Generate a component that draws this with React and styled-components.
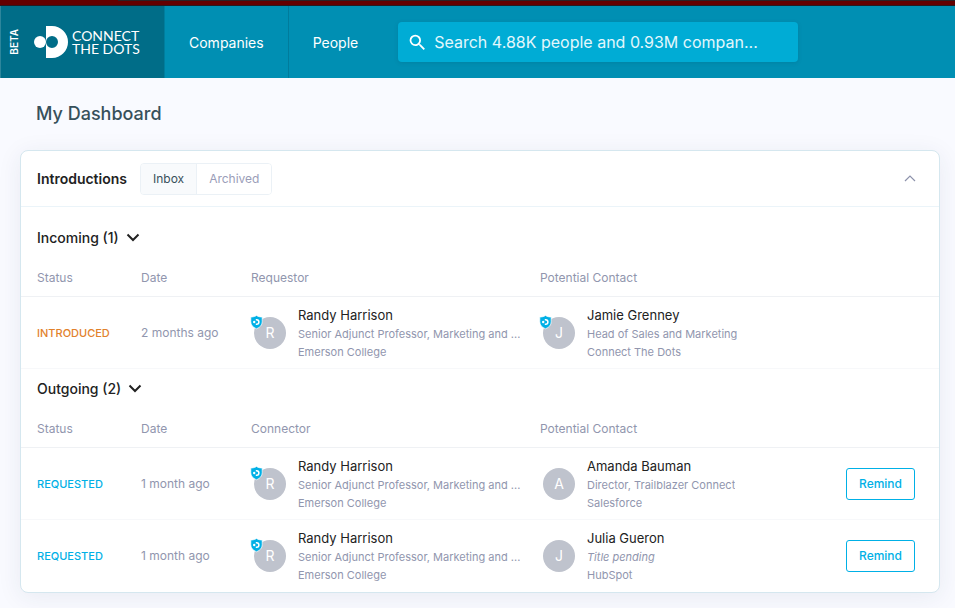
import React, { useState } from "react";
import styled, { createGlobalStyle } from "styled-components";

//Styling//
const GlobalStyle = createGlobalStyle`
  * {
    box-sizing: border-box;
  }
  body {
    margin: 0;
    background: #f9faff;
    color: #222;
    font-family: Inter, "Liberation Sans", sans-serif;
  }
  button,
  input {
    font-family: inherit;
  }
`;

const TopStrip = styled.div`
  height: 6px;
  background: linear-gradient(90deg, #640000 118px, #2b2226 118px) top / 100% 1px no-repeat, #640000;
  border-bottom: 1px solid #2a1a20;
`;

const Header = styled.header`
  display: flex;
  align-items: stretch;
  height: 72px;
  background: #008fb3;
`;

const Brand = styled.a`
  display: flex;
  align-items: center;
  width: 165px;
  padding-left: 7px;
  background: #006d88;
  border-left: 1px solid #2d869c;
  border-right: 1px solid #007e9e;
  color: #fff;
  text-decoration: none;
`;

const Beta = styled.span`
  width: 12px;
  margin-right: 14px;
  writing-mode: vertical-rl;
  transform: rotate(180deg);
  font-size: 10px;
  line-height: 12px;
  font-weight: 600;
`;

const Wordmark = styled.span`
  width: 80px;
  margin-left: 4px;
  font-family: Lato, sans-serif;
  font-size: 14px;
  line-height: 13px;
`;

const Nav = styled.nav`
  display: flex;
`;

const NavItem = styled.a`
  display: flex;
  align-items: center;
  padding: 0 24px;
  color: #fff;
  font-size: 14px;
  text-decoration: none;

  & + & {
    border-left: 1px solid #007c9c;
  }
`;

const Search = styled.label`
  display: flex;
  align-items: center;
  align-self: center;
  flex: 0 1 400px;
  height: 40px;
  margin: 0 16px;
  padding: 0 9px;
  background: #00acd5;
  border-radius: 4px;
  box-shadow: 0 1px 4px rgba(0, 80, 100, 0.2);
  color: #fff;
`;

const SearchInput = styled.input`
  flex: 1;
  min-width: 0;
  margin-left: 6px;
  padding: 0;
  border: 0;
  outline: 0;
  background: none;
  color: #fff;
  font-size: 16px;

  &::placeholder {
    color: #e3f7fc;
    opacity: 1;
  }
`;

const Main = styled.main`
  padding: 20px 15px 16px 20px;
`;

const PageTitle = styled.h1`
  margin: 0 0 20px;
  padding-left: 16px;
  color: #37505b;
  font-size: 18px;
  line-height: 32px;
  font-weight: 500;
`;

const Card = styled.section`
  background: #fff;
  border: 1px solid #d5e7ef;
  border-radius: 8px;
  box-shadow: 0 4px 24px rgba(40, 50, 90, 0.08);
`;

const CardHeader = styled.div`
  display: flex;
  align-items: center;
  height: 56px;
  padding: 0 19px 0 16px;
  border-bottom: 1px solid #ebf4f9;
`;

const CardTitle = styled.h2`
  margin: 0 13px 0 0;
  font-size: 14px;
  font-weight: 600;
`;

const Tabs = styled.div`
  display: flex;
  height: 32px;
  margin-right: auto;
  border: 1px solid #ebf1f6;
  border-radius: 4px;
  overflow: hidden;
`;

const Tab = styled.button`
  padding: 0 12px;
  border: 0;
  background: ${props => (props.$active ? "#f8fafc" : "#fff")};
  color: ${props => (props.$active ? "#37505b" : "#9a9db8")};
  font-size: 12px;

  & + & {
    border-left: 1px solid #ebf1f6;
  }
`;

const IconButton = styled.button`
  display: flex;
  padding: ${props => (props.$tight ? "0" : "4px")};
  border: 0;
  background: none;
  color: inherit;
`;

const Group = styled.section`
  &:first-of-type {
    padding-top: 11px;
  }
`;

const GroupHeader = styled.div`
  display: flex;
  align-items: center;
  height: 42px;
  padding: 0 16px 4px;
`;

const GroupTitle = styled.h3`
  margin: 0 4px 0 0;
  font-size: 14px;
  font-weight: 500;
`;

const Table = styled.table`
  width: 100%;
  table-layout: fixed;
  border-collapse: separate;
  border-spacing: 0;
`;

const Th = styled.th`
  width: ${props => props.$width || "auto"};
  height: 37px;
  padding: 0 0 2px ${props => (props.$first ? "16px" : "0")};
  border-bottom: 1px solid #eff1f4;
  color: #9196ae;
  font-size: 12px;
  font-weight: 400;
  text-align: left;
`;

const Row = styled.tr`
  ${Group}:last-of-type &:last-child td {
    border-bottom-color: transparent;
  }
`;

const Td = styled.td`
  height: 72px;
  padding: 0 ${props => (props.$action ? "24px" : "0")} 0 ${props => (props.$first ? "16px" : "0")};
  border-bottom: 1px solid #f7f8fa;
  color: #9196ae;
  font-size: 12px;
  text-align: ${props => (props.$action ? "right" : "left")};
`;

const Status = styled.span`
  color: ${props => (props.$introduced ? "#e2812b" : "#00b0e6")};
  font-size: 11px;
  font-weight: 500;
`;

const PersonBox = styled.div`
  display: flex;
  align-items: center;
  padding-left: 3px;
`;

const Avatar = styled.div`
  position: relative;
  flex: none;
  width: 32px;
  height: 32px;
  margin-right: 12px;
  border-radius: 50%;
  background: #bfc3cd;
  color: #fff;
  font-size: 14px;
  line-height: 32px;
  text-align: center;
`;

const Badge = styled.svg`
  position: absolute;
  top: -2px;
  left: -4px;
`;

const Details = styled.div`
  min-width: 0;
  padding-right: 16px;
`;

const Name = styled.div`
  color: #222;
  font-size: 13px;
  line-height: 20px;
`;

const Line = styled.div`
  overflow: hidden;
  text-overflow: ellipsis;
  white-space: nowrap;
  font-size: 11px;
  line-height: 18px;
  font-style: ${props => (props.$pending ? "italic" : "normal")};
`;

const Remind = styled.button`
  height: 32px;
  padding: 0 12px;
  border: 1px solid #00b0e6;
  border-radius: 3px;
  background: #fff;
  color: #00b0e6;
  font-size: 12px;
  font-weight: 500;
`;

const randy = {
  name: "Randy Harrison",
  title: "Senior Adjunct Professor, Marketing and ...",
  company: "Emerson College",
  member: true
};

const groups = [
  {
    title: "Incoming (1)",
    from: "Requestor",
    rows: [
      {
        status: "INTRODUCED",
        date: "2 months ago",
        person: randy,
        contact: {
          name: "Jamie Grenney",
          title: "Head of Sales and Marketing",
          company: "Connect The Dots",
          member: true
        }
      }
    ]
  },
  {
    title: "Outgoing (2)",
    from: "Connector",
    rows: [
      {
        status: "REQUESTED",
        date: "1 month ago",
        person: randy,
        contact: {
          name: "Amanda Bauman",
          title: "Director, Trailblazer Connect",
          company: "Salesforce"
        }
      },
      {
        status: "REQUESTED",
        date: "1 month ago",
        person: randy,
        contact: { name: "Julia Gueron", company: "HubSpot" }
      }
    ]
  }
];

const Logo = () => (
  <svg width="34" height="32" viewBox="0 0 34 32" fill="#fff" aria-hidden="true">
    <circle cx="6" cy="16" r="6" />
    <path
      fillRule="evenodd"
      d="M12 0h6a16 16 0 0 1 0 32h-6V16a6 6 0 1 0 12 0a6 6 0 1 0-12 0z"
    />
  </svg>
);

const SearchIcon = () => (
  <svg width="21" height="21" viewBox="0 0 24 24" fill="currentColor" aria-hidden="true">
    <path d="M15.5 14h-.79l-.28-.27A6.47 6.47 0 0 0 16 9.5 6.5 6.5 0 1 0 9.5 16c1.61 0 3.09-.59 4.23-1.57l.27.28v.79l5 4.99L20.49 19l-4.99-5zm-6 0C7.01 14 5 11.99 5 9.5S7.01 5 9.5 5 14 7.01 14 9.5 11.99 14 9.5 14z" />
  </svg>
);

const ChevronDown = () => (
  <svg width="20" height="20" viewBox="0 0 20 20" fill="none" aria-hidden="true">
    <path d="M4.5 7.5L10 13l5.5-5.5" stroke="#222" strokeWidth="2" />
  </svg>
);

const ChevronUp = () => (
  <svg width="12" height="12" viewBox="0 0 12 12" fill="none" aria-hidden="true">
    <path d="M1 8l5-5 5 5" stroke="#8d92ab" strokeWidth="1.2" />
  </svg>
);

const MemberBadge = () => (
  <Badge width="14" height="15" viewBox="0 0 14 15" aria-hidden="true">
    <path
      d="M6.5.4C8 1.6 10 2 12.2 2v4.8c0 3.2-2 5.5-5.7 7C2.800 12.300.8 10 .8 6.800V2C3 2 5 1.600 6.500.4z"
      fill="#00b0e6"
      stroke="#fff"
      strokeWidth=".7"
    />
    <circle cx="4.2" cy="7" r="1.2" fill="#fff" />
    <path d="M5.8 4.7h.8a2.3 2.3 0 0 1 0 4.6h-.8" fill="none" stroke="#fff" strokeWidth="1.5" />
  </Badge>
);

const Person = ({ name, title, company, member }) => (
  <PersonBox>
    <Avatar>
      {name[0]}
      {member && <MemberBadge />}
    </Avatar>
    <Details>
      <Name>{name}</Name>
      <Line $pending={!title}>{title || "Title pending"}</Line>
      <Line>{company}</Line>
    </Details>
  </PersonBox>
);

const Introductions = ({ title, from, rows }) => {
  const [open, setOpen] = useState(true);

  return (
    <Group>
      <GroupHeader>
        <GroupTitle>{title}</GroupTitle>
        <IconButton $tight aria-label={`Toggle ${title}`} onClick={() => setOpen(!open)}>
          <ChevronDown />
        </IconButton>
      </GroupHeader>
      {open && (
        <Table>
          <thead>
            <tr>
              <Th $first $width="120px">Status</Th>
              <Th $width="110px">Date</Th>
              <Th>{from}</Th>
              <Th>Potential Contact</Th>
              <Th $width="110px" aria-label="Action" />
            </tr>
          </thead>
          <tbody>
            {rows.map((row, i) => (
              <Row key={i}>
                <Td $first>
                  <Status $introduced={row.status === "INTRODUCED"}>{row.status}</Status>
                </Td>
                <Td>{row.date}</Td>
                <Td>
                  <Person {...row.person} />
                </Td>
                <Td>
                  <Person {...row.contact} />
                </Td>
                <Td $action>{row.status === "REQUESTED" && <Remind>Remind</Remind>}</Td>
              </Row>
            ))}
          </tbody>
        </Table>
      )}
    </Group>
  );
};

const App = () => {
  const [tab, setTab] = useState("Inbox");
  const [open, setOpen] = useState(true);

  return (
    <>
      <GlobalStyle />
      <TopStrip />
      <Header>
        <Brand href="#">
          <Beta>BETA</Beta>
          <Logo />
          <Wordmark>CONNECT THE DOTS</Wordmark>
        </Brand>
        <Nav>
          <NavItem href="#">Companies</NavItem>
          <NavItem href="#">People</NavItem>
        </Nav>
        <Search>
          <SearchIcon />
          <SearchInput
            type="text"
            aria-label="Search"
            placeholder="Search 4.88K people and 0.93M compan..."
          />
        </Search>
      </Header>
      <Main>
        <PageTitle>My Dashboard</PageTitle>
        <Card>
          <CardHeader>
            <CardTitle>Introductions</CardTitle>
            <Tabs>
              {["Inbox", "Archived"].map(name => (
                <Tab key={name} $active={tab === name} onClick={() => setTab(name)}>
                  {name}
                </Tab>
              ))}
            </Tabs>
            <IconButton aria-label="Collapse" onClick={() => setOpen(!open)}>
              <ChevronUp />
            </IconButton>
          </CardHeader>
          {open && groups.map(group => <Introductions key={group.title} {...group} />)}
        </Card>
      </Main>
    </>
  );
};

export default App;
